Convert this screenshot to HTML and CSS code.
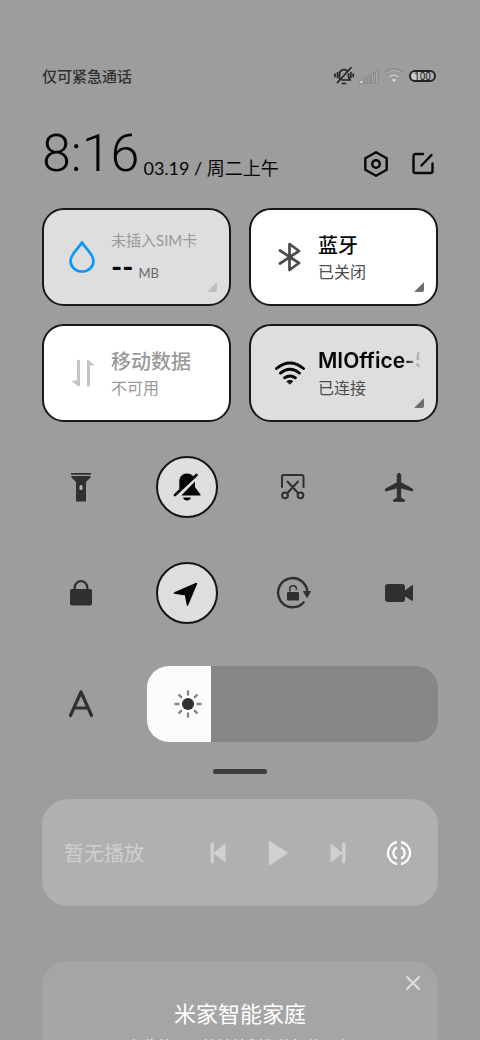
FILE: index.html
```html
<!DOCTYPE html>
<html lang="zh-CN">
<head>
<meta charset="utf-8">
<meta name="viewport" content="width=device-width, initial-scale=1">
<title>控制中心</title>
<link rel="stylesheet" href="styles.css">
</head>
<body>
<main class="screen">
  <div class="status">
    <span class="carrier">仅可紧急通话</span>
    <div class="status-icons">
      <svg width="20" height="18" viewBox="0 0 20 18" fill="none" stroke="#222" stroke-width="1.7" stroke-linecap="round">
        <path d="M5.500 11.500V7a4.500 4.500 0 0 1 7.500-3.200M14.500 7v3l1.500 3H8M17 .800 3.500 15.500M8.500 16.500h3"/>
        <path d="M3.500 5.500v5M1 7v2.500M16.800 5.500v5M19.200 7v2.500"/>
      </svg>
      <svg width="20" height="15" viewBox="0 0 20 15" fill="#a8a8a8" stroke="#838383" stroke-width=".8">
        <path fill="#d4d4d4" d="M.500 14.500v-2.200L4 10.500v4z"/>
        <path d="M5.500 14.500V9.200l2-1v6.300zM9 14.500V6.800l2-1v8.700zM12.500 14.500V4.200l2-1v11.300zM16.500 14.500V2l2.500-1.200v13.700z"/>
      </svg>
      <svg width="20" height="16" viewBox="0 0 20 16" fill="none">
        <path stroke="#858585" stroke-width="3.200" d="M1.500 5.500Q10-1.500 18.500 5.500"/>
        <path stroke="#aaa" stroke-width="2" d="M2 5.500Q10-1 18 5.500"/>
        <path stroke="#858585" stroke-width="3" d="M4.500 9Q10 4.500 15.500 9"/>
        <path stroke="#c4c4c4" stroke-width="1.900" d="M5 9Q10 5 15 9"/>
        <path fill="#d8d8d8" stroke="#888" stroke-width=".8" d="M7 11.500q3-2.500 6 0L10 15z"/>
      </svg>
      <span class="battery">100</span>
    </div>
  </div>

  <header class="head">
    <span class="clock">8:16</span>
    <span class="date">03.19 / 周二上午</span>
    <button class="plain" aria-label="设置">
      <svg width="26" height="28" viewBox="0 0 26 28" fill="none" stroke="#080808" stroke-width="2.400" stroke-linejoin="round">
        <path d="M13 2.200 23.700 8.300V19.700L13 25.800 2.300 19.700V8.300z"/><circle cx="13" cy="14" r="3.800"/>
      </svg>
    </button>
    <button class="plain" aria-label="编辑">
      <svg width="24" height="28" viewBox="0 0 24 28" fill="none" stroke="#080808" stroke-width="2.400" stroke-linecap="round">
        <path d="M12 4H4.500a2 2 0 0 0-2 2v15a2 2 0 0 0 2 2h15a2 2 0 0 0 2-2V13.500M10.500 15.500 20.500 5"/>
      </svg>
    </button>
  </header>

  <section class="tiles">
    <button class="tile on">
      <svg class="tile-icon" width="32" height="34" viewBox="0 0 32 34" fill="none" stroke="#0f98f8" stroke-width="2.700" stroke-linejoin="round">
        <path d="M15 2.500C12 8 3.500 14 3.500 21a11.500 10.500 0 0 0 23 0C26.500 14 18 8 15 2.500z"/>
      </svg>
      <span class="tile-text">
        <span class="usage-name">未插入SIM卡</span>
        <span class="usage"><b>--</b><small>MB</small></span>
      </span>
      <i class="corner faint"></i>
    </button>
    <button class="tile">
      <svg class="tile-icon" width="32" height="34" viewBox="0 0 32 34" fill="none" stroke="#4b4b4b" stroke-width="2.700" stroke-linecap="round" stroke-linejoin="round">
        <path d="M6 10.500 25 23 15.500 30V4l9.500 7L6 23.500"/>
      </svg>
      <span class="tile-text"><span class="name">蓝牙</span><span class="state">已关闭</span></span>
      <i class="corner"></i>
    </button>
    <button class="tile off">
      <svg class="tile-icon" width="32" height="34" viewBox="0 0 32 34" fill="#c4c4c4">
        <path d="M10 5a1.500 1.500 0 0 1 3 0V30h-2.500L4.500 24.500H10zM20 29a1.500 1.500 0 0 0 3 0V9.500h5L21.500 4H20z"/>
      </svg>
      <span class="tile-text"><span class="name">移动数据</span><span class="state">不可用</span></span>
    </button>
    <button class="tile on">
      <svg class="tile-icon" width="32" height="34" viewBox="0 0 32 34" fill="none" stroke="#080808" stroke-width="2.900" stroke-linecap="round">
        <path d="M2.500 12.500Q16 1.500 29.500 12.500M6.500 17.200Q16 9.500 25.500 17.200M10.700 21.800Q16 18 21.300 21.800"/>
        <path fill="#080808" stroke-width="1" stroke-linejoin="round" d="M13.200 25.200q2.800-1.800 5.600 0L16 28z"/>
      </svg>
      <span class="tile-text"><span class="name fade">MIOffice-5G</span><span class="state">已连接</span></span>
      <i class="corner"></i>
    </button>
  </section>

  <section class="toggles">
    <button class="toggle" aria-label="手电筒">
      <svg width="32" height="32" viewBox="0 0 32 32" fill="#303030">
        <path d="M6 2h20v1.700H6zM6.500 5h19v1.500L21 11v19.500H11V11L6.500 6.500z"/><rect x="14.500" y="14" width="3" height="5" rx="1.500" fill="#b5b5b5"/>
      </svg>
    </button>
    <button class="toggle active" aria-label="静音">
      <svg width="32" height="32" viewBox="0 0 32 32" fill="#050505">
        <path d="M8.300 18V10.500C8.300 5.500 11.500 2.500 16 2.500c2.700 0 5 1.200 6.300 3L8.300 19.500z"/>
        <path d="M24 10.500v5.500l5.500 7.500v1H10.300zM12 26.500h8c-.700 4-7.300 4-8 0z"/>
        <path d="M4 24 25.500 4" fill="none" stroke="#050505" stroke-width="2.600" stroke-linecap="round"/>
      </svg>
    </button>
    <button class="toggle" aria-label="截屏">
      <svg width="32" height="32" viewBox="0 0 32 32" fill="none" stroke="#303030" stroke-width="2" stroke-linecap="round">
        <path d="M5 16V5.500A1.500 1.500 0 0 1 6.500 4H25a1.500 1.500 0 0 1 1.500 1.500V16M10.500 10.500 21 22M21 10.500 10.500 22"/>
        <circle cx="8" cy="24.300" r="2.900"/><circle cx="23.500" cy="24.300" r="2.900"/>
      </svg>
    </button>
    <button class="toggle" aria-label="飞行模式">
      <svg width="32" height="32" viewBox="0 0 32 32" fill="#303030" stroke="#303030" stroke-linejoin="round">
        <path d="M14.300 3.500q1.700-3 3.400 0v8L29.500 18v2L17.700 16.800V27l3.800 2v1.300h-11V29l3.800-2V16.800L2.500 20v-2l11.800-6.500z"/>
      </svg>
    </button>
    <button class="toggle" aria-label="锁屏">
      <svg width="32" height="32" viewBox="0 0 32 32" fill="#303030">
        <rect x="5" y="12" width="22" height="16.500" rx="2"/><path d="M9.700 13v-2.500a6.300 6.300 0 0 1 12.600 0V13" fill="none" stroke="#303030" stroke-width="2.200"/>
      </svg>
    </button>
    <button class="toggle active" aria-label="定位">
      <svg width="32" height="32" viewBox="0 0 32 32" fill="#050505" stroke="#050505" stroke-width="1.500" stroke-linejoin="round">
        <path d="M25.500 6.500 16.500 28 14.500 17.700 3.500 16z"/>
      </svg>
    </button>
    <button class="toggle" aria-label="方向锁定">
      <svg width="36" height="34" viewBox="0 0 36 34" fill="#303030">
        <path d="M28.500 26.500A14.600 14.600 0 1 1 32.300 17" fill="none" stroke="#303030" stroke-width="2.400" stroke-linecap="round"/>
        <path stroke="#303030" stroke-linejoin="round" d="M28.500 15.500H35.500L32 21.500z"/>
        <rect x="12" y="16" width="12" height="8.500" rx="1"/><path d="M14.800 15.500V13a3.300 3.300 0 0 1 6.600 0v.800" fill="none" stroke="#303030" stroke-width="1.600"/>
      </svg>
    </button>
    <button class="toggle" aria-label="录屏">
      <svg width="32" height="32" viewBox="0 0 32 32" fill="#303030" stroke="#303030" stroke-linejoin="round">
        <rect x="2.500" y="7.500" width="19" height="17" rx="2"/><path d="M20.500 15 29.500 8.500v15L20.500 18z"/>
      </svg>
    </button>
  </section>

  <section class="bright">
    <button class="toggle" aria-label="自动亮度">
      <svg width="32" height="32" viewBox="0 0 32 32" fill="none" stroke="#303030" stroke-width="3.2" stroke-linecap="round" stroke-linejoin="round">
        <path d="M5.500 27.500 16 4 26.500 27.500M9.500 20h13"/>
      </svg>
    </button>
    <div class="level">
      <input class="slider" type="range" min="0" max="100" value="22" aria-label="亮度">
      <svg class="sun" width="28" height="28" viewBox="0 0 28 28" fill="none" stroke="#858585" stroke-width="2.400" stroke-linecap="round">
        <circle cx="14" cy="14" r="6" fill="#303030" stroke="none"/>
        <path d="M14 1.500v3M14 23.500v3M1.500 14h3M23.500 14h3M5.200 5.200l2 2M20.800 20.800l2 2M5.200 22.800l2-2M20.800 7.200l2-2"/>
      </svg>
    </div>
  </section>

  <div class="handle"></div>

  <section class="media">
    <span class="media-title">暂无播放</span>
    <button class="plain" aria-label="上一首">
      <svg width="24" height="26" viewBox="0 0 24 26" fill="#d0d0d0" stroke="#d0d0d0" stroke-linejoin="round">
        <rect x="5" y="3" width="2.500" height="20" rx="1"/><path d="M19 4v18L8 13z"/>
      </svg>
    </button>
    <button class="plain" aria-label="播放">
      <svg width="24" height="26" viewBox="0 0 24 26" fill="#d0d0d0" stroke="#d0d0d0" stroke-width="1.500" stroke-linejoin="round">
        <path d="M3.500 1.700v22.600L21 13z"/>
      </svg>
    </button>
    <button class="plain" aria-label="下一首">
      <svg width="24" height="26" viewBox="0 0 24 26" fill="#d0d0d0" stroke="#d0d0d0" stroke-linejoin="round">
        <rect x="16.500" y="3" width="2.500" height="20" rx="1"/><path d="M5 4v18L16 13z"/>
      </svg>
    </button>
    <button class="plain" aria-label="音频设备">
      <svg width="26" height="26" viewBox="0 0 26 26" fill="none" stroke="#fff" stroke-width="2.300">
        <path d="M11 2A11.200 11.200 0 0 0 11 24M15 2A11.200 11.200 0 0 1 15 24M11 7.500A6 6 0 0 0 11 18.500M15 7.500A6 6 0 0 1 15 18.500"/>
      </svg>
    </button>
  </section>

  <section class="home">
    <button class="plain close" aria-label="关闭">
      <svg width="16" height="16" viewBox="0 0 16 16" fill="none" stroke="#e0e0e0" stroke-width="2" stroke-linecap="round"><path d="M2 2l12 12M14 2 2 14"/></svg>
    </button>
    <h2 class="home-title">米家智能家庭</h2>
    <p class="home-note">在此处可以快捷控制您的智能设备</p>
  </section>
</main>
</body>
</html>
```
FILE: styles.css
```css
* { box-sizing: border-box; }
body {
  margin: 0;
  background: #9d9d9d;
  color: #050505;
  font-family: Lato, "Noto Sans CJK SC", sans-serif;
}
button { font: inherit; color: inherit; padding: 0; border: 0; background: none; }
svg { display: block; flex: none; }
.screen {
  height: 100vh;
  overflow: hidden;
  padding: 64px 42px 0;
  display: flex;
  flex-direction: column;
}
.screen > * { flex: none; }

.status { display: flex; justify-content: space-between; align-items: center; height: 24px; }
.carrier { font-size: 15px; line-height: 22px; font-weight: 500; color: #303030; }
.status-icons { display: flex; align-items: center; gap: 5px; padding-right: 2px; }
.battery {
  width: 27px;
  height: 12px;
  border: 2px solid #222;
  border-radius: 6px;
  background: linear-gradient(90deg, #d0d0d0, #a8a8a8);
  color: #222;
  font-family: Roboto, sans-serif;
  font-size: 10px;
  line-height: 9px;
  text-align: center;
}

.head { display: flex; align-items: flex-end; height: 92px; gap: 22px; padding-right: 3px; }
.clock {
  font-family: "Liberation Sans Narrow", Roboto, "Noto Sans CJK SC", sans-serif;
  font-weight: 300;
  font-size: 52px;
  line-height: 52px;
  margin-right: -18px;
}
.date { font-size: 18px; line-height: 24px; margin-right: auto; white-space: nowrap; }
.plain { display: flex; }
.head .plain { padding-bottom: 2px; }

.tiles { display: grid; grid-template-columns: repeat(2, minmax(0, 1fr)); gap: 18px; margin-top: 28px; }
.tile {
  position: relative;
  display: flex;
  align-items: center;
  gap: 12px;
  height: 98px;
  padding: 0 15px 0 23px;
  border: 2px solid #181818;
  border-radius: 22px;
  background: #fff;
  text-align: left;
}
.tile.on { background: #dedede; }
.tile-text { display: flex; flex-direction: column; min-width: 0; flex: 1; }
.name { font-size: 20px; line-height: 30px; font-weight: 500; white-space: nowrap; overflow: hidden; }
.fade {
  font-family: Inter, sans-serif;
  font-size: 21px;
  font-weight: 600;
  -webkit-mask-image: linear-gradient(90deg, #000 85%, transparent);
  mask-image: linear-gradient(90deg, #000 85%, transparent);
}
.state { font-size: 16px; line-height: 24px; color: #4b4b4b; }
.off .name, .off .state { color: #999; }
.usage-name { font-size: 15px; line-height: 24px; color: #999; white-space: nowrap; }
.usage { display: flex; align-items: baseline; gap: 5px; line-height: 28px; }
.usage b { font-size: 30px; }
.usage small { font-size: 13px; color: #666; }
.corner {
  position: absolute;
  right: 12px;
  bottom: 12px;
  width: 10px;
  height: 10px;
  border-radius: 0 1px 2px 1px;
  background: #6e6e6e;
  clip-path: polygon(100% 0, 100% 100%, 0 100%);
}
.corner.faint { background: #bdbdbd; }

.toggles {
  display: grid;
  grid-template-columns: repeat(4, 62px);
  justify-content: space-between;
  row-gap: 44px;
  padding: 0 8px;
  margin-top: 34px;
}
.toggle { display: flex; align-items: center; justify-content: center; width: 62px; height: 62px; flex: none; }
.active { border: 2px solid #141414; border-radius: 50%; background: #dedede; }

.bright { display: flex; align-items: center; gap: 35px; padding-left: 8px; margin-top: 42px; }
.level { position: relative; flex: 1; height: 76px; }
.slider {
  appearance: none;
  display: block;
  width: 100%;
  height: 100%;
  margin: 0;
  border-radius: 22px;
  background: linear-gradient(90deg, #fcfcfc 22%, #868686 22%);
}
.slider::-webkit-slider-thumb { appearance: none; width: 1px; height: 76px; }
.sun { position: absolute; left: 27px; top: 24px; pointer-events: none; }
.handle { align-self: center; width: 54px; height: 5px; margin-top: 27px; border-radius: 3px; background: #3c3c3c; }

.media {
  display: flex;
  align-items: center;
  gap: 36px;
  height: 107px;
  margin-top: 25px;
  padding: 0 26px 0 22px;
  border-radius: 26px;
  background: #b0b0b0;
}
.media-title { font-size: 20px; color: #cfcfcf; margin-right: auto; }

.home {
  display: flex;
  flex-direction: column;
  margin-top: 55px;
  padding: 14px 17px 24px;
  border-radius: 26px;
  background: #a5a5a5;
  color: #fff;
  text-align: center;
}
.close { align-self: flex-end; }
.home-title { margin: 7px 0 0; font-size: 22px; line-height: 32px; font-weight: 400; }
.home-note { margin: 4px 0 0; font-size: 15px; line-height: 24px; }
```
